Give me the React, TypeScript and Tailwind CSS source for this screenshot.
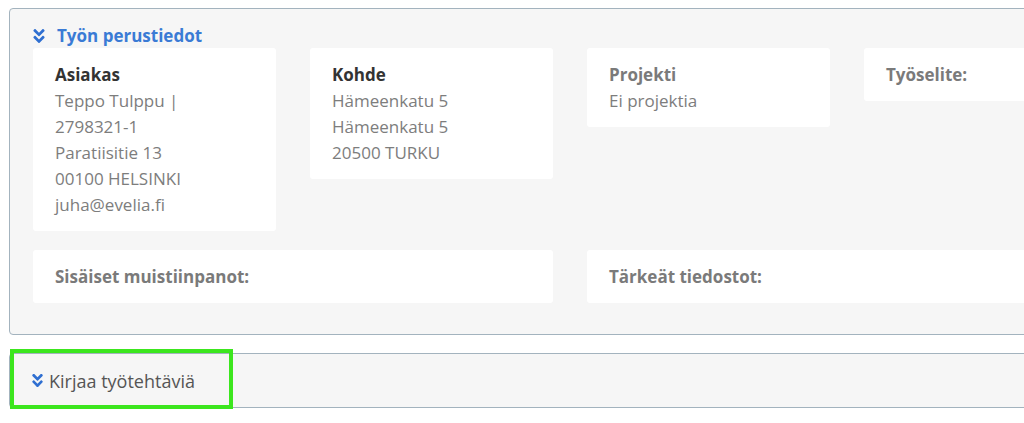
import { FaAngleDoubleDown } from "react-icons/fa";

type Card = {
  title: string;
  lines?: string[];
  dark?: boolean;
};

const topCards: Card[] = [
  {
    title: "Asiakas",
    dark: true,
    lines: ["Teppo Tulppu |", "2798321-1", "Paratiisitie 13", "00100 HELSINKI", "juha@evelia.fi"],
  },
  { title: "Kohde", dark: true, lines: ["Hämeenkatu 5", "Hämeenkatu 5", "20500 TURKU"] },
  { title: "Projekti", lines: ["Ei projektia"] },
  { title: "Työselite:" },
];

function InfoCard({ card, className = "" }: { card: Card; className?: string }) {
  return (
    <div className={`bg-white rounded-[3px] pl-[22px] pr-3 pt-[14px] pb-[13px] ${className}`}>
      <div className={`font-bold leading-[26px] ${card.dark ? "text-[#333333]" : "text-[#7a7a7a]"}`}>
        {card.title}
      </div>
      {card.lines?.map((l, i) => (
        <div key={i} className="leading-[26px] text-[#7d7d7d]">
          {l}
        </div>
      ))}
    </div>
  );
}

export default function App() {
  return (
    <div className="w-[1024px] h-[423px] overflow-hidden bg-white pt-2 pl-[9px] text-[17px] font-['Open_Sans',sans-serif]">
      {/* perustiedot */}
      <div className="w-[1060px] bg-[#f6f6f6] border border-[#a3b3be] rounded-[4px] pl-[23px] pb-[31px]">
        <div className="flex items-center h-[39px] pt-[16px] pb-[1px] gap-[12px]">
          <FaAngleDoubleDown className="text-[#2f6fd1] w-[12px] h-[18px]" />
          <span className="font-bold text-[#3a7bd5] text-[17px] leading-[22px]">Työn perustiedot</span>
        </div>
        <div className="grid grid-cols-[243px_243px_243px_243px] gap-x-[34px] gap-y-[19px] items-start">
          {topCards.map((c) => (
            <InfoCard key={c.title} card={c} />
          ))}
          <InfoCard card={{ title: "Sisäiset muistiinpanot:" }} className="col-span-2" />
          <InfoCard card={{ title: "Tärkeät tiedostot:" }} className="col-span-2" />
        </div>
      </div>

      {/* työtehtävät */}
      <div className="relative mt-[18px] w-[1060px]">
        <div className="bg-[#f6f6f6] border border-[#a3b3be] rounded-[4px] h-[55px] flex items-center pl-[22px] gap-[6px]">
          <FaAngleDoubleDown className="text-[#2f6fd1] w-[11px] h-[17px]" />
          <span className="text-[#555555] text-[18px] leading-[22px] pt-[1px]">Kirjaa työtehtäviä</span>
        </div>
        <div className="absolute left-[1px] top-[-4px] w-[223px] h-[60px] border-[4px] border-[#3ce61e]" />
      </div>
    </div>
  );
}
